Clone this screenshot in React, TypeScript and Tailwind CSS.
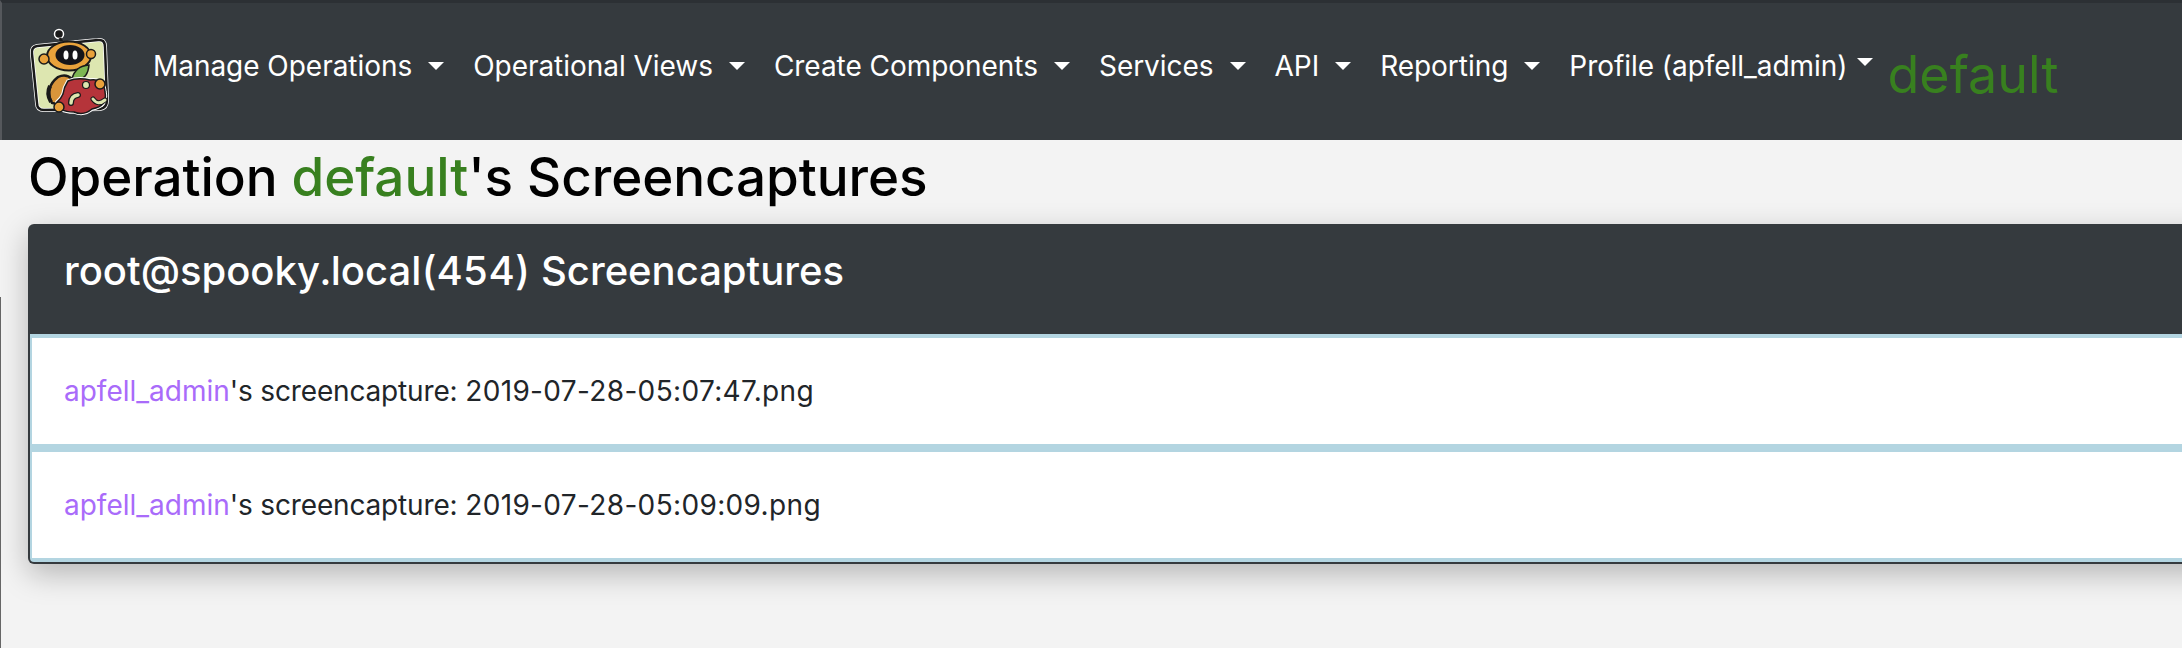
const navItems = ["Manage Operations", "Operational Views", "Create Components", "Services", "API", "Reporting"];

const Caret = ({ className }: { className: string }) => (
  <span
    className={`inline-block h-0 w-0 border-x-[8px] border-t-[8px] border-x-transparent border-t-white ${className}`}
  />
);

const framePath = "M37 46 L98 40 Q105 39 105 47 L107 100 Q107 108 100 109 L44 110 Q37 110 37 103 L32 54 Q31 47 37 46 Z";
const applePath = "M68 81 Q78 77 90 80 Q104 78 105 92 Q108 106 92 109 Q84 116 74 112 Q58 112 57 102 Q61 99 63 94 Q64 87 68 81 Z";

const Logo = () => (
  <svg width="82" height="90" viewBox="28 28 82 90" className="shrink-0">
    {/* antenna */}
    <circle cx="59" cy="34" r="4.5" fill="#1a1a1a" stroke="#fff" strokeWidth="1.5" />
    <path d="M60 38 L64 47" stroke="#1a1a1a" strokeWidth="3" />
    {/* frame */}
    <path d={framePath} fill="#dde6b0" stroke="#fff" strokeWidth="4" />
    <path d={framePath} fill="none" stroke="#1a1a1a" strokeWidth="2.5" />
    {/* head */}
    <ellipse cx="69" cy="56" rx="22" ry="14.5" fill="#e9a23b" stroke="#1a1a1a" strokeWidth="2" />
    <ellipse cx="70" cy="55" rx="14.5" ry="10" fill="#15151a" />
    <ellipse cx="66" cy="55" rx="2.5" ry="4.5" fill="#fff" />
    <ellipse cx="75" cy="55" rx="2.5" ry="4.5" fill="#fff" />
    <circle cx="44" cy="59" r="5" fill="#e9a23b" stroke="#1a1a1a" strokeWidth="1.5" />
    <circle cx="91" cy="54" r="4.5" fill="#e9a23b" stroke="#1a1a1a" strokeWidth="1.5" />
    {/* body */}
    <path d="M52 103 Q44 88 58 77 Q66 73 72 79 L66 106 Z" fill="#d9953a" stroke="#1a1a1a" strokeWidth="2.5" />
    <path d="M50 86 Q46 94 51 102" fill="none" stroke="#1a1a1a" strokeWidth="4" />
    {/* leaf */}
    <path d="M72 79 Q75 66 89 65 Q88 78 78 80 Z" fill="#7db653" stroke="#1a1a1a" strokeWidth="1.5" />
    {/* apple */}
    <path d={applePath} fill="#b5343a" stroke="#fff" strokeWidth="3.5" />
    <path d={applePath} fill="#b5343a" stroke="#1a1a1a" strokeWidth="1.5" />
    {/* worms */}
    <path d="M71 103 Q71 96 78 95" fill="none" stroke="#1a1a1a" strokeWidth="6" strokeLinecap="round" />
    <path d="M71 103 Q71 96 78 95" fill="none" stroke="#dde6b0" strokeWidth="3.5" strokeLinecap="round" />
    <path d="M93 99 Q98 106 105 100" fill="none" stroke="#1a1a1a" strokeWidth="5" strokeLinecap="round" />
    <path d="M93 99 Q98 106 105 100" fill="none" stroke="#dde6b0" strokeWidth="3" strokeLinecap="round" />
    <circle cx="86" cy="85" r="3.5" fill="#dde6b0" stroke="#1a1a1a" strokeWidth="1.2" />
    {/* hands */}
    <circle cx="100" cy="84" r="5" fill="#e9a23b" stroke="#1a1a1a" strokeWidth="1.5" />
    <circle cx="59" cy="107" r="5" fill="#e9a23b" stroke="#1a1a1a" strokeWidth="1.5" />
  </svg>
);

const captures = [
  { file: "2019-07-28-05:07:47.png", border: "border-t-[4px]" },
  { file: "2019-07-28-05:09:09.png", border: "border-t-[8px]" },
];

export default function App() {
  return (
    <div className="relative h-[648px] w-[2182px] overflow-hidden bg-[#f3f3f3] font-['Inter',sans-serif] text-[#212529]">
      <span className="absolute bottom-0 left-0 top-[297px] w-px bg-[#666666]" />
      <nav className="flex h-[140px] items-start border-t-[3px] border-l-2 border-t-[#2c3034] border-l-[#55585c] bg-[#353a3e] pl-[26px]">
        <div className="mt-[25px]">
          <Logo />
        </div>
        <ul className="ml-[43px] mt-[43px] flex items-center text-[28px] leading-[40px] text-white">
          {navItems.map((item) => (
            <li key={item} className="mr-[29px] flex items-center">
              <span className="whitespace-nowrap tracking-[-0.04px]">{item}</span>
              <Caret className="ml-4" />
            </li>
          ))}
          <li className="flex items-center">
            <span className="whitespace-nowrap tracking-[-0.04px]">Profile (apfell_admin)</span>
            <Caret className="mb-2 ml-[9px]" />
          </li>
        </ul>
        <span className="ml-[15px] mt-[36px] text-[52px] leading-[72px] text-[#38801f]">default</span>
      </nav>

      <main className="pl-[28px]">
        <h1 className="h-[84px] text-[53px] font-medium leading-[74px] tracking-[-0.08px] text-black">
          Operation <span className="text-[#38801f]">default</span>'s Screencaptures
        </h1>
        <section className="w-[2300px] rounded-[6px] bg-[#353a3e] pb-[2px] pl-[2px] shadow-[0_10px_30px_rgba(0,0,0,0.25)]">
          <h2 className="-ml-[2px] h-[110px] pl-[36px] pt-[22px] text-[40px] font-medium leading-[50px] tabular-nums text-white">
            root@spooky.local(454) Screencaptures
          </h2>
          <ul className="rounded-bl-[4px] border-b-[4px] border-l-[2px] border-[#b3d5e1] bg-white">
            {captures.map((capture) => (
              <li
                key={capture.file}
                className={`h-[110px] ${capture.border} border-[#b3d5e1] pl-[32px] pt-[33px] text-[28px] leading-[40px] last:h-[114px]`}
              >
                <span className="text-[#a96bfa]">apfell_admin</span>
                <span className="tracking-[-0.16px]">'s screencapture: </span>
                <span className="tracking-[0.35px]">{capture.file}</span>
              </li>
            ))}
          </ul>
        </section>
      </main>
    </div>
  );
}
